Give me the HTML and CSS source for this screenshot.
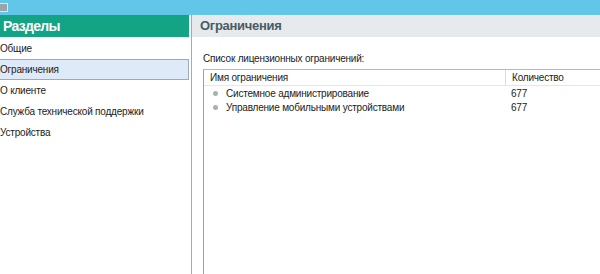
FILE: index.html
```html
<!DOCTYPE html>
<html lang="ru">
<head>
    <meta charset="UTF-8">
    <title>Ограничения</title>
    <link rel="stylesheet" href="styles.css">
</head>
<body>
    <div class="titlebar">
        <span class="app-icon"></span>
    </div>
    <div class="window">
        <div class="sidebar">
            <div class="sidebar-head">Разделы</div>
            <ul class="nav">
                <li>Общие</li>
                <li class="active">Ограничения</li>
                <li>О клиенте</li>
                <li>Служба технической поддержки</li>
                <li>Устройства</li>
            </ul>
        </div>
        <div class="content">
            <div class="content-head">Ограничения</div>
            <div class="content-body">
                <p class="caption">Список лицензионных ограничений:</p>
                <div class="table">
                    <div class="row head">
                        <div class="col-name">Имя ограничения</div>
                        <div class="col-count">Количество</div>
                    </div>
                    <div class="row">
                        <div class="col-name"><span class="dot"></span>Системное администрирование</div>
                        <div class="col-count">677</div>
                    </div>
                    <div class="row">
                        <div class="col-name"><span class="dot"></span>Управление мобильными устройствами</div>
                        <div class="col-count">677</div>
                    </div>
                </div>
            </div>
        </div>
    </div>
</body>
</html>
```

FILE: styles.css
```css
html, body {
    height: 100%;
}
body {
    margin: 0;
    font-family: "Liberation Sans", sans-serif;
    font-size: 10px;
    letter-spacing: -0.2px;
    color: #222;
    background: #fff;
    display: flex;
    flex-direction: column;
    overflow: hidden;
}
.titlebar {
    height: 15px;
    background: #62c6e8;
    flex: none;
}
.app-icon {
    display: block;
    width: 7px;
    height: 7px;
    margin-top: 3px;
    background: #9aa4aa;
    border: 1px solid #dfe6ea;
    border-left: none;
}
.window {
    flex: 1;
    display: flex;
}
.sidebar {
    width: 191px;
    border-right: 1px solid #a9a9a9;
    flex: none;
}
.sidebar-head {
    height: 22px;
    line-height: 22px;
    background: #13a385;
    color: #fff;
    font-weight: bold;
    font-size: 14px;
    letter-spacing: -0.7px;
    padding-left: 3px;
    border-right: 2px solid #f2f2f2;
}
.nav {
    list-style: none;
    margin: 0;
    padding: 0;
    padding-top: 1px;
}
.nav li {
    height: 19px;
    line-height: 19px;
    margin-right: 2px;
    border: 1px solid transparent;
    border-left: none;
}
.nav li.active {
    background: #dfeaf8;
    border-color: #99abc0;
}
.content {
    flex: 1;
    display: flex;
    flex-direction: column;
}
.content-head {
    height: 22px;
    line-height: 22px;
    background: #e6eaed;
    color: #4b5a62;
    font-weight: bold;
    font-size: 13px;
    letter-spacing: -0.3px;
    padding-left: 8px;
}
.content-body {
    flex: 1;
    display: flex;
    flex-direction: column;
    padding-left: 11px;
}
.caption {
    margin: 0;
    padding: 16px 0 5px 0;
}
.table {
    flex: 1;
    border-left: 1px solid #a0a0a0;
    border-top: 1px solid #b8b8b8;
}
.row {
    display: flex;
    height: 14px;
    line-height: 14px;
}
.row.head {
    height: 15px;
    line-height: 15px;
    border-bottom: 1px solid #e6e6e6;
    margin-bottom: 1px;
}
.col-name {
    width: 295px;
    padding-left: 6px;
    flex: none;
}
.col-count {
    padding-left: 5px;
}
.row.head .col-count {
    border-left: 1px solid #dcdcdc;
}
.row .col-count {
    padding-left: 6px;
}
.dot {
    display: inline-block;
    width: 5px;
    height: 5px;
    border-radius: 50%;
    background: #a8b0b4;
    margin: 0 8px 1px 3px;
    vertical-align: middle;
}
```
